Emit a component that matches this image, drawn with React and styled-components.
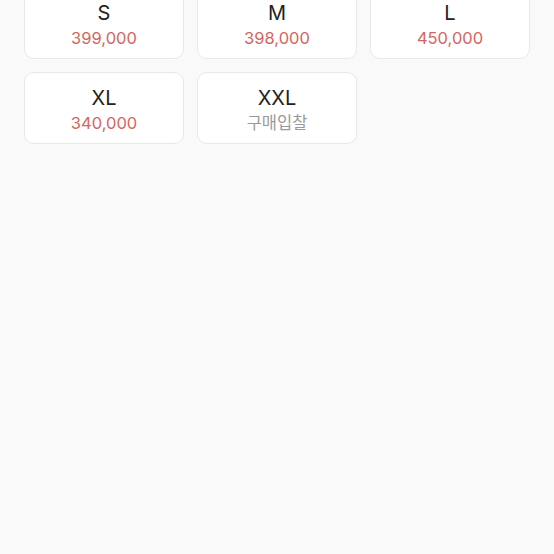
import styled, { createGlobalStyle } from 'styled-components';

const GlobalStyle = createGlobalStyle`
  html, body {
    margin: 0;
    padding: 0;
    background: #f9f9f9;
  }
  body {
    font-family: Inter, 'Noto Sans CJK KR', sans-serif;
  }
`;

const Page = styled.div`
  min-height: 100vh;
  background: #f9f9f9;
  overflow: hidden;
`;

const Grid = styled.div`
  display: grid;
  grid-template-columns: repeat(3, 160px);
  gap: 13px 13px;
  padding: 0 24px;
  margin-top: -13px;
`;

const Card = styled.button`
  height: 72px;
  background: #ffffff;
  border: 1px solid #e9e9e9;
  border-radius: 10px;
  display: flex;
  flex-direction: column;
  align-items: center;
  justify-content: center;
  gap: 2px;
  padding: 3px 0 0;
  font-family: inherit;
  cursor: pointer;
`;

const Size = styled.span`
  font-size: 20px;
  color: #222222;
  line-height: 24px;
`;

const Price = styled.span`
  font-size: 16.5px;
  line-height: 22px;
  color: ${(p) => (p.$bid ? '#9a9a9a' : '#d4665f')};
`;

const sizes = [
  { size: 'S', price: '399,000' },
  { size: 'M', price: '398,000' },
  { size: 'L', price: '450,000' },
  { size: 'XL', price: '340,000' },
  { size: 'XXL', price: '구매입찰', bid: true },
];

const App = () => (
  <Page>
    <GlobalStyle />
    <Grid>
      {sizes.map((s) => (
        <Card key={s.size}>
          <Size>{s.size}</Size>
          <Price $bid={s.bid}>{s.price}</Price>
        </Card>
      ))}
    </Grid>
  </Page>
);

export default App;
